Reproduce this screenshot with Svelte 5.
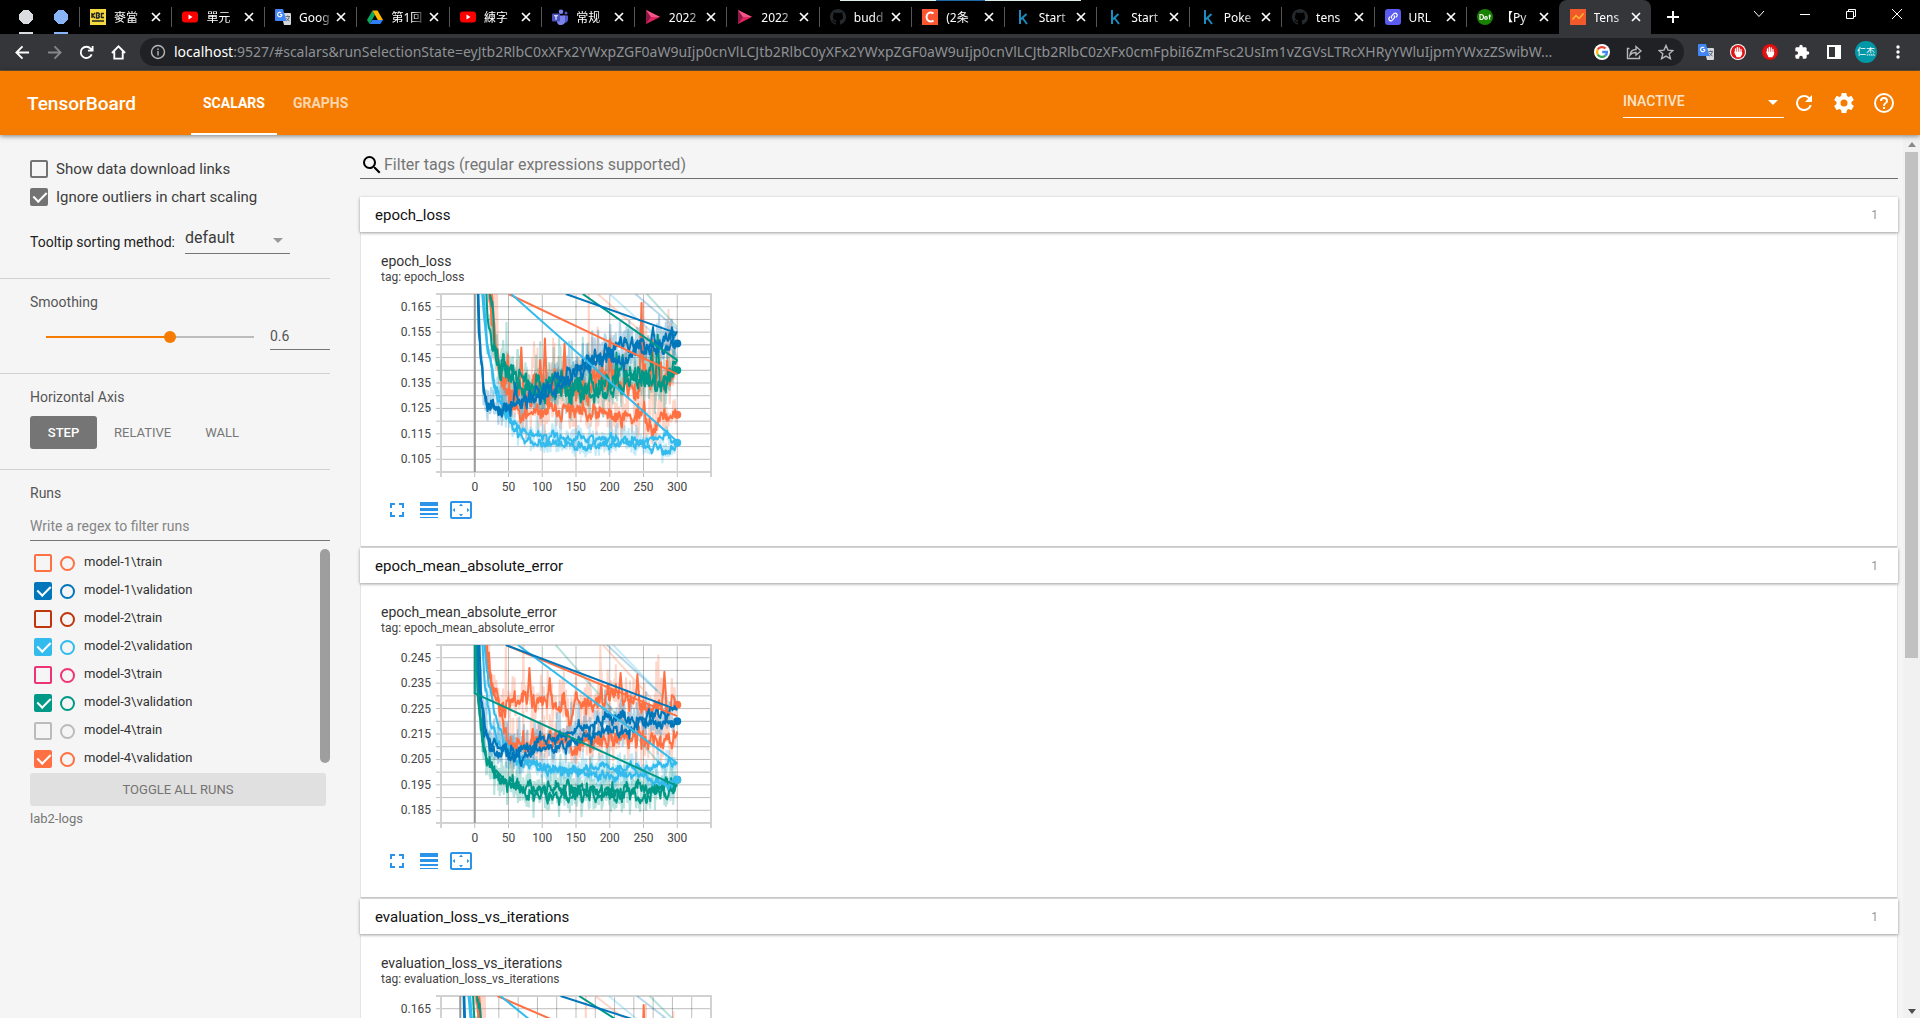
<script>
  const tabs = [
    { icon: 'kbc', title: '麥當' },
    { icon: 'youtube', title: '單元' },
    { icon: 'translate', title: 'Goog' },
    { icon: 'drive', title: '第1回' },
    { icon: 'youtube', title: '練字' },
    { icon: 'teams', title: '常规' },
    { icon: 'play', title: '2022' },
    { icon: 'play', title: '2022' },
    { icon: 'github', title: 'budd' },
    { icon: 'c', title: '(2条' },
    { icon: 'k', title: 'Start' },
    { icon: 'k', title: 'Start' },
    { icon: 'k', title: 'Poke' },
    { icon: 'github', title: 'tens' },
    { icon: 'link', title: 'URL' },
    { icon: 'dot', title: '【Py' },
    { icon: 'tb', title: 'Tens', active: true },
  ];

  const urlRest =
    ':9527/#scalars&runSelectionState=eyJtb2RlbC0xXFx2YWxpZGF0aW9uIjp0cnVlLCJtb2RlbC0yXFx2YWxpZGF0aW9uIjp0cnVlLCJtb2RlbC0zXFx0cmFpbiI6ZmFsc2UsIm1vZGVsLTRcXHRyYWluIjpmYWxzZSwibW...';

  const ORANGE = '#ff7043';
  const BLUE = '#0077bb';
  const CYAN = '#33bbee';
  const TEAL = '#009988';

  let runs = $state([
    { name: 'model-1\\train', color: ORANGE, on: false },
    { name: 'model-1\\validation', color: BLUE, on: true },
    { name: 'model-2\\train', color: '#bf360c', on: false },
    { name: 'model-2\\validation', color: CYAN, on: true },
    { name: 'model-3\\train', color: '#ee3377', on: false },
    { name: 'model-3\\validation', color: TEAL, on: true },
    { name: 'model-4\\train', color: '#bbbbbb', on: false },
    { name: 'model-4\\validation', color: ORANGE, on: true },
  ]);

  let showLinks = $state(false);
  let ignoreOutliers = $state(true);
  let smoothing = $state(0.6);
  let axis = $state('STEP');

  function toggleAll() {
    const next = !runs.some((r) => r.on);
    for (const r of runs) r.on = next;
  }

  // Plot area inside each chart's SVG
  const P = { x: 60, y: 1, w: 270, h: 178 };

  function rng(seed) {
    let s = seed;
    return () => {
      s = (s * 1664525 + 1013904223) % 4294967296;
      return s / 4294967296;
    };
  }

  function lerp(points, x) {
    for (let i = 1; i < points.length; i++) {
      if (x <= points[i][0]) {
        const [x0, y0] = points[i - 1];
        const [x1, y1] = points[i];
        return y0 + ((y1 - y0) * (x - x0)) / (x1 - x0);
      }
    }
    return points[points.length - 1][1];
  }

  function trace(pass, c, seed) {
    const rand = rng(seed);
    const { pts, amp, spikes = [] } = pass;
    let line = '';
    let raw = '';
    let drift = 0;
    for (let s = pts[0][0]; s <= 300; s += 1) {
      const base = lerp(pts, s);
      const n = (rand() + rand() + rand() - 1.5) * 1.7;
      drift = drift * 0.55 + n * amp;
      const damp = s > 294 ? (300 - s) / 6 : 1;
      let v = base + drift * damp;
      for (const [sx, sv] of spikes) {
        const d = Math.abs(s - sx);
        if (d < 3) v = Math.max(v, sv - ((sv - base) * d) / 3);
      }
      const r = base + (n * amp * 2.8 + (rand() > 0.9 ? amp * 8 * rand() : 0)) * damp;
      const px = c.sx(s).toFixed(1);
      line += `${line ? 'L' : 'M'}${px} ${c.sy(v).toFixed(1)}`;
      raw += `${raw ? 'L' : 'M'}${px} ${c.sy(r).toFixed(1)}`;
    }
    return { line, raw };
  }

  function build(def) {
    const span = def.xmax - def.xmin;
    const c = {
      sx: (v) => P.x + (((def.stretch ?? 1) * v - def.xmin) / span) * P.w,
      sy: (v) => P.y + ((def.top - v) / 0.07) * P.h,
    };
    const series = def.series.map((s, i) => ({
      color: s.color,
      passes: s.passes.map((p, j) => trace(p, c, def.seed + i * 17 + j * 5)),
      link: s.link.map(([x, y]) => `${c.sx(x)},${c.sy(y)}`).join(' '),
      faint: s.faint.map(([x, y]) => `${c.sx(x)},${c.sy(y)}`).join(' '),
      dot: { x: c.sx(300), y: c.sy(s.dot) },
    }));
    const rows = Array.from({ length: 13 }, (_, i) => P.y + (P.h * (i + 1)) / 14);
    const yLabels = Array.from({ length: 7 }, (_, i) => ({
      y: P.y + (P.h * (1 + 2 * i)) / 14,
      text: (def.top - 0.005 - 0.01 * i).toFixed(3),
    }));
    const cols = Array.from({ length: def.cols - 1 }, (_, i) => P.x + (P.w * (i + 1)) / def.cols);
    const xLabels = def.labels.map((v) => ({ x: P.x + ((v - def.xmin) / span) * P.w, text: v }));
    return { ...def, series, rows, cols, yLabels, xLabels, zero: P.x + ((0 - def.xmin) / span) * P.w };
  }

  const lossSeries = [
    {
      color: ORANGE, dot: 0.1225,
      passes: [
        { amp: 0.0019, pts: [[22, 0.185], [27, 0.165], [32, 0.146], [45, 0.132], [60, 0.125], [80, 0.122], [110, 0.124], [200, 0.122], [250, 0.1225], [264, 0.117], [280, 0.123], [300, 0.1225]] },
        { amp: 0.0034, pts: [[17, 0.185], [24, 0.165], [32, 0.145], [48, 0.133], [80, 0.13], [130, 0.133], [200, 0.135], [240, 0.132], [300, 0.14]], spikes: [[49, 0.146], [69, 0.149], [97, 0.144], [104, 0.1525], [133, 0.1505], [200, 0.152], [247, 0.1665], [263, 0.152]] },
      ],
      link: [[50, 0.17], [300, 0.1385]], faint: [[182, 0.17], [300, 0.143]],
    },
    {
      color: TEAL, dot: 0.14,
      passes: [
        { amp: 0.0021, pts: [[13, 0.185], [20, 0.16], [28, 0.149], [40, 0.14], [55, 0.137], [80, 0.132], [120, 0.132], [160, 0.131], [200, 0.132], [240, 0.136], [280, 0.134], [300, 0.144]], spikes: [[210, 0.147]] },
        { amp: 0.0023, pts: [[18, 0.185], [26, 0.158], [34, 0.145], [50, 0.14], [80, 0.135], [120, 0.134], [180, 0.134], [220, 0.138], [260, 0.136], [300, 0.14]], spikes: [[26, 0.167], [219, 0.146], [262, 0.148], [271, 0.154]] },
      ],
      link: [[160, 0.17], [300, 0.144]], faint: [[255, 0.17], [300, 0.157]],
    },
    {
      color: CYAN, dot: 0.1115,
      passes: [
        { amp: 0.001, pts: [[9, 0.185], [18, 0.15], [33, 0.13], [50, 0.121], [66, 0.117], [90, 0.115], [110, 0.1135], [200, 0.113], [245, 0.111], [270, 0.113], [285, 0.1145], [300, 0.112]] },
        { amp: 0.001, pts: [[6, 0.185], [15, 0.155], [28, 0.137], [45, 0.124], [60, 0.116], [75, 0.111], [110, 0.111], [160, 0.1105], [240, 0.1115], [270, 0.1095], [288, 0.107], [300, 0.1115]] },
      ],
      link: [[54, 0.17], [300, 0.112]], faint: [[200, 0.17], [300, 0.146]],
    },
    {
      color: BLUE, dot: 0.1505,
      passes: [
        { amp: 0.0015, pts: [[3, 0.185], [6, 0.155], [12, 0.136], [18, 0.128], [28, 0.125], [40, 0.125], [60, 0.127], [100, 0.131], [130, 0.137], [165, 0.143], [200, 0.147], [215, 0.151], [250, 0.15], [275, 0.151], [290, 0.154], [300, 0.155]], spikes: [[60, 0.135], [264, 0.157]] },
        { amp: 0.0015, pts: [[4, 0.185], [8, 0.148], [13, 0.134], [20, 0.127], [30, 0.124], [50, 0.125], [70, 0.127], [100, 0.132], [130, 0.134], [160, 0.14], [200, 0.145], [225, 0.145], [240, 0.149], [270, 0.149], [300, 0.1505]] },
      ],
      link: [[135, 0.17], [300, 0.1545]], faint: [[238, 0.17], [300, 0.156]],
    },
  ];

  const maeSeries = [
    {
      color: ORANGE, dot: 0.2265,
      passes: [
        { amp: 0.0024, pts: [[12, 0.265], [18, 0.246], [26, 0.234], [38, 0.227], [60, 0.228], [100, 0.228], [140, 0.225], [180, 0.228], [200, 0.231], [240, 0.227], [300, 0.2265]], spikes: [[81, 0.241], [111, 0.237], [216, 0.239], [241, 0.2385], [281, 0.2395]] },
        { amp: 0.0022, pts: [[14, 0.265], [20, 0.24], [32, 0.228], [45, 0.218], [60, 0.211], [100, 0.212], [150, 0.211], [200, 0.213], [250, 0.213], [285, 0.212], [300, 0.216]] },
      ],
      link: [[46, 0.25], [300, 0.222]], faint: [[190, 0.25], [275, 0.225]],
    },
    {
      color: TEAL, dot: 0.197,
      passes: [
        { amp: 0.0016, pts: [[1, 0.265], [4, 0.232], [10, 0.214], [18, 0.204], [40, 0.197], [60, 0.194], [100, 0.191], [160, 0.1915], [230, 0.192], [280, 0.191], [300, 0.195]] },
        { amp: 0.0016, pts: [[3, 0.265], [7, 0.225], [15, 0.207], [30, 0.2], [50, 0.195], [90, 0.194], [150, 0.1935], [200, 0.192], [260, 0.1935], [300, 0.196]] },
      ],
      link: [[0, 0.265], [0, 0.231], [300, 0.1945]], faint: [[120, 0.25], [285, 0.2]],
    },
    {
      color: CYAN, dot: 0.197,
      passes: [
        { amp: 0.001, pts: [[8, 0.265], [15, 0.235], [25, 0.218], [40, 0.209], [70, 0.204], [110, 0.201], [200, 0.2015], [260, 0.202], [285, 0.204], [300, 0.2035]] },
        { amp: 0.001, pts: [[9, 0.265], [18, 0.24], [30, 0.222], [45, 0.211], [75, 0.204], [130, 0.2], [160, 0.2], [200, 0.198], [240, 0.199], [280, 0.196], [300, 0.197]] },
      ],
      link: [[64, 0.25], [300, 0.2035]], faint: [[205, 0.25], [300, 0.224]],
    },
    {
      color: BLUE, dot: 0.22,
      passes: [
        { amp: 0.0014, pts: [[3, 0.265], [7, 0.232], [14, 0.217], [22, 0.21], [40, 0.209], [70, 0.208], [100, 0.212], [130, 0.215], [165, 0.218], [200, 0.222], [240, 0.221], [270, 0.223], [300, 0.225]] },
        { amp: 0.0014, pts: [[5, 0.265], [10, 0.225], [18, 0.212], [30, 0.208], [60, 0.206], [90, 0.208], [130, 0.21], [170, 0.214], [200, 0.217], [225, 0.216], [250, 0.219], [300, 0.22]] },
      ],
      link: [[46, 0.25], [300, 0.2245]], faint: [[196, 0.25], [270, 0.232]],
    },
  ];

  const sections = [
    build({ name: 'epoch_loss', top: 0.17, seed: 11, xmin: -50, xmax: 350, cols: 8, labels: [0, 50, 100, 150, 200, 250, 300], series: lossSeries }),
    build({ name: 'epoch_mean_absolute_error', top: 0.25, seed: 47, xmin: -50, xmax: 350, cols: 8, labels: [0, 50, 100, 150, 200, 250, 300], series: maeSeries }),
    build({ name: 'evaluation_loss_vs_iterations', top: 0.17, seed: 11, xmin: -20, xmax: 260, stretch: 0.77, cols: 14, labels: [0, 40, 80, 120, 160, 200, 240], series: lossSeries }),
  ];
</script>

{#snippet favicon(kind)}
  <svg class="fav" viewBox="0 0 16 16" aria-hidden="true">
    {#if kind === 'kbc'}
      <rect width="16" height="16" fill="#f3d93f" />
      <path d="M2 4v5M5 4L2.5 6.5 5 9M6.5 4v5h2l1-1.2-1-1.3 1-1.3L8.500 4zM14 4.500h-2.500v4H14M2 12h12" stroke="#222" stroke-width="1.400" fill="none" />
    {:else if kind === 'youtube'}
      <rect y="2.500" width="16" height="11" rx="3" fill="#f00" />
      <path d="M6.500 5.500v5L10.500 8z" fill="#fff" />
    {:else if kind === 'translate'}
      <path d="M6 4h9a1 1 0 0 1 1 1v10a1 1 0 0 1-1 1H9z" fill="#d5d8dc" />
      <path d="M1 0h7l3.500 12H1a1 1 0 0 1-1-1V1a1 1 0 0 1 1-1z" fill="#4285f4" />
      <path d="M7 5.500H5M7 5.500A2.200 2.200 0 1 1 6.200 3.800" stroke="#fff" stroke-width="1.100" fill="none" />
      <path d="M10.500 7.500H15M12.700 6.500v1M14.300 7.500c-.3 2-1.500 3.500-3 4.500M11.500 9c.5 1.300 1.500 2.300 3 3" stroke="#5f6b77" fill="none" />
    {:else if kind === 'drive'}
      <path d="M5.500 1.500L0 11l2.700 4L8 5.800z" fill="#0da960" />
      <path d="M5.500 1.500h5l5.500 9.500h-5.200z" fill="#ffba00" />
      <path d="M5.300 11H16l-2.700 4H2.700z" fill="#2d7df6" />
    {:else if kind === 'teams'}
      <circle cx="9" cy="2.800" r="2.300" fill="#7b83eb" />
      <circle cx="14" cy="4" r="1.500" fill="#5059c9" />
      <path d="M11 6.500h5v4.500a3 3 0 0 1-4 2.500z" fill="#5059c9" />
      <path d="M5 6.500h8v5a4 4 0 0 1-8 1z" fill="#7b83eb" />
      <rect y="4.500" width="8" height="8" rx="1" fill="#4b53bc" />
      <path d="M2 6.700h4M4 6.700v4" stroke="#fff" stroke-width="1.100" />
    {:else if kind === 'play'}
      <path d="M1 1l14 7-14 7z" fill="#e0245e" />
      <path d="M1 1l5 7-5 7z" fill="#8e1748" />
      <path d="M1 1l14 7H6z" fill="#f0588a" />
    {:else if kind === 'github'}
      <path fill="#24292e" d="M8 0C3.580 0 0 3.580 0 8c0 3.540 2.290 6.530 5.470 7.590.4.070.55-.17.55-.38 0-.19-.01-.82-.01-1.490-2.010.37-2.530-.49-2.690-.94-.09-.23-.48-.94-.82-1.130-.28-.15-.68-.52-.01-.53.63-.01 1.080.58 1.230.82.72 1.210 1.870.87 2.330.66.07-.52.28-.87.51-1.070-1.780-.2-3.640-.89-3.640-3.950 0-.87.31-1.590.82-2.150-.08-.2-.36-1.020.08-2.120 0 0 .67-.21 2.200.82.64-.18 1.320-.27 2-.27s1.360.09 2 .27c1.530-1.040 2.200-.82 2.200-.82.44 1.100.16 1.920.08 2.120.51.56.82 1.270.82 2.150 0 3.070-1.870 3.750-3.650 3.950.29.25.54.73.54 1.480 0 1.070-.01 1.930-.01 2.200 0 .21.15.46.55.38A8 8 0 0 0 8 0" />
    {:else if kind === 'c'}
      <rect width="16" height="16" fill="#fc5531" />
      <path d="M11.500 4.500C8 2 4.500 4.500 4.500 8s3.500 6 7 3.500" stroke="#fff" stroke-width="2" fill="none" />
    {:else if kind === 'k'}
      <path d="M5 1v14M11.500 5L5.500 10.500M7.500 9l4.500 6" stroke="#1d8bbd" stroke-width="2" fill="none" />
    {:else if kind === 'link'}
      <rect width="16" height="16" rx="3" fill="#5b5bf0" />
      <path d="M7 9.500a2 2 0 0 1 0-2.800L9 4.600a2 2 0 0 1 2.800 2.800l-1 1M9 6.500a2 2 0 0 1 0 2.800l-2 2.100a2 2 0 0 1-2.800-2.800l1-1" stroke="#fff" stroke-width="1.200" fill="none" />
    {:else if kind === 'dot'}
      <circle cx="8" cy="8" r="8" fill="#178200" />
      <path d="M3 5.500v5h1a2.500 2.500 0 0 0 0-5zM11.500 7h2.500M12.600 5.500v5" stroke="#fff" stroke-width="1.100" fill="none" />
      <circle cx="9" cy="8.900" r="1.300" stroke="#fff" stroke-width="1.100" fill="none" />
    {:else}
      <rect width="16" height="16" fill="#f1592a" />
      <path d="M2.500 10.500L6 6.500 9 9.500 13.500 4.500" stroke="#ffb733" stroke-width="1.500" fill="none" />
    {/if}
  </svg>
{/snippet}

<div class="window">
  <div class="tabstrip">
    <div class="strip-mark" aria-hidden="true"></div>
    <div class="pinned"><i></i><i class="blue"></i></div>
    <div class="tabs">
      {#each tabs as t}
        <div class="tab" class:active={t.active}>
          {@render favicon(t.icon)}
          <span class="tab-title">{t.title}</span>
          <button class="close" aria-label="Close tab">
            <svg viewBox="0 0 10 10"><path d="M1 1l8 8M9 1L1 9" stroke="#fff" stroke-width="1.700" /></svg>
          </button>
        </div>
      {/each}
    </div>
    <button class="newtab" aria-label="New tab">
      <svg width="14" height="14" viewBox="0 0 14 14"><path d="M7 1v12M1 7h12" stroke="#fff" stroke-width="2" /></svg>
    </button>
    <div class="winctl">
      <button aria-label="Search tabs"><svg viewBox="0 0 12 12"><path d="M1 3l5 5.500L11 3" /></svg></button>
      <button aria-label="Minimize"><svg viewBox="0 0 12 12"><path d="M1 6.500h10" /></svg></button>
      <button aria-label="Restore"><svg viewBox="0 0 12 12"><path d="M1.500 3.500h7v7h-7zM3.500 3.500v-2h7v7h-2" /></svg></button>
      <button aria-label="Close window"><svg viewBox="0 0 12 12"><path d="M1 1l10 10M11 1L1 11" /></svg></button>
    </div>
  </div>

  <div class="toolbar">
    <div class="nav">
      <button aria-label="Back"><svg viewBox="0 0 16 16"><path d="M15 8H2M8 1.500L1.500 8 8 14.500" /></svg></button>
      <button aria-label="Forward" class="dim"><svg viewBox="0 0 16 16"><path d="M1 8h13M8 1.500L14.500 8 8 14.500" /></svg></button>
      <button aria-label="Reload"><svg viewBox="0 0 16 16"><path d="M13.500 10A6 6 0 1 1 12.500 4L14 5.500M14.500 1v5h-5" /></svg></button>
      <button aria-label="Home"><svg viewBox="0 0 16 16"><path d="M1 8.500L8 1.500l7 7M3.500 7v7.500h9V7" /></svg></button>
    </div>
    <div class="omnibox">
      <svg class="info" viewBox="0 0 16 16"><circle cx="8" cy="8" r="6.500" /><path d="M8 7v4.500M8 4.500V6" /></svg>
      <div class="url"><b>localhost</b>{urlRest}</div>
      <button aria-label="Google">
        <svg viewBox="0 0 16 16">
          <circle cx="8" cy="8" r="8" fill="#fff" />
          <g fill="none" stroke-width="2.300">
            <path d="M11.500 4.500A5 5 0 0 0 3.700 5.500" stroke="#ea4335" /><path d="M3.700 5.500a5 5 0 0 0 0 5" stroke="#fbbc05" />
            <path d="M3.700 10.500a5 5 0 0 0 7.600 1.200" stroke="#34a853" /><path d="M11.300 11.700A5 5 0 0 0 13 8H8.200" stroke="#4285f4" />
          </g>
        </svg>
      </button>
      <button aria-label="Share"><svg class="line" viewBox="0 0 16 16"><path d="M3.500 4.500h-2v10h12v-3M4 11c.5-4 3-5.500 6-5.500V2.500L15 7l-5 4V8.500C7.500 8.500 5.500 9 4 11z" /></svg></button>
      <button aria-label="Bookmark"><svg class="line" viewBox="0 0 16 16"><path d="M8 1.500l2 4.600 5 .4-3.800 3.300 1.200 4.900L8 12.100l-4.400 2.600 1.200-4.900L1 6.500l5-.4z" /></svg></button>
    </div>
    <div class="ext">
      <button aria-label="Translate">{@render favicon('translate')}</button>
      {#each [true, false] as ring}
        <button aria-label="Ad blocker">
          <svg viewBox="0 0 16 16">
            <circle cx="8" cy="8" r="8" fill={ring ? '#fff' : '#d50d0d'} />
            <circle cx="8" cy="8" r="7" fill="#e01414" />
            <path d="M5.500 5v5M7.300 3.500V9M9.200 4v5M11 5.500V10M5 8.500h6.500v1.500L10 12.500H7z" stroke="#fff" stroke-width="1.300" fill="#fff" stroke-linecap="round" />
          </svg>
        </button>
      {/each}
      <button aria-label="Extensions"><svg viewBox="0 0 24 24"><path fill="#fff" d="M20.500 11H19V7c0-1.100-.9-2-2-2h-4V3.500a2.500 2.500 0 0 0-5 0V5H4c-1.100 0-2 .9-2 2v3.800h1.500a2.700 2.700 0 0 1 0 5.400H2V20c0 1.100.9 2 2 2h3.800v-1.500a2.700 2.700 0 0 1 5.400 0V22H17c1.100 0 2-.9 2-2v-4h1.500a2.500 2.500 0 0 0 0-5z" /></svg></button>
      <button aria-label="Side panel"><svg viewBox="0 0 16 16"><path d="M1 1h14v14H1zM3 3v10h6V3z" fill="#fff" fill-rule="evenodd" /></svg></button>
      <button aria-label="Profile" class="avatar">仁杰</button>
      <button aria-label="Menu"><svg viewBox="0 0 16 16" fill="#fff"><circle cx="8" cy="3" r="1.700" /><circle cx="8" cy="8" r="1.700" /><circle cx="8" cy="13" r="1.700" /></svg></button>
    </div>
  </div>

  <header>
    <h1>TensorBoard</h1>
    <nav>
      <a class="current" href="#scalars">SCALARS</a>
      <a href="#graphs">GRAPHS</a>
    </nav>
    <div class="pick">
      <select aria-label="Inactive dashboards"><option>INACTIVE</option></select>
      <svg width="10" height="5" viewBox="0 0 10 5"><path d="M0 0h10L5 5z" fill="#fff" /></svg>
    </div>
    <div class="actions">
      <button aria-label="Reload data"><svg viewBox="0 0 24 24"><path d="M17.650 6.350A7.960 7.960 0 0 0 12 4a8 8 0 1 0 7.730 10h-2.080A6 6 0 1 1 12 6c1.660 0 3.140.69 4.220 1.780L13 11h7V4z" /></svg></button>
      <button aria-label="Settings"><svg viewBox="0 0 24 24"><path d="M19.430 12.980c.04-.32.07-.64.07-.98s-.03-.66-.07-.98l2.110-1.650c.19-.15.24-.42.12-.64l-2-3.460c-.12-.22-.39-.3-.61-.22l-2.490 1c-.52-.4-1.080-.73-1.690-.98l-.38-2.650A.49.49 0 0 0 14 2h-4c-.25 0-.46.18-.49.42l-.38 2.650c-.61.25-1.170.59-1.690.98l-2.490-1c-.23-.09-.49 0-.61.22l-2 3.460c-.13.22-.07.49.12.64l2.110 1.650c-.04.32-.07.65-.07.98s.03.66.07.98l-2.110 1.650c-.19.15-.24.42-.12.64l2 3.460c.12.22.39.3.61.22l2.490-1c.52.4 1.080.73 1.690.98l.38 2.650c.03.24.24.42.49.42h4c.25 0 .46-.18.49-.42l.38-2.650c.61-.25 1.170-.59 1.690-.98l2.490 1c.23.09.49 0 .61-.22l2-3.460c.12-.22.07-.49-.12-.64zM12 15.500a3.500 3.500 0 1 1 0-7 3.500 3.500 0 0 1 0 7z" /></svg></button>
      <button aria-label="Help"><svg viewBox="0 0 24 24"><path d="M11 18h2v-2h-2zm1-16a10 10 0 1 0 0 20 10 10 0 0 0 0-20zm0 18a8 8 0 1 1 0-16 8 8 0 0 1 0 16zm0-14a4 4 0 0 0-4 4h2a2 2 0 1 1 4 0c0 2-3 1.750-3 5h2c0-2.250 3-2.500 3-5a4 4 0 0 0-4-4z" /></svg></button>
    </div>
  </header>

  <div class="content">
    <aside>
      <section class="opts">
        <label class="check"><input type="checkbox" bind:checked={showLinks} />Show data download links</label>
        <label class="check"><input type="checkbox" bind:checked={ignoreOutliers} />Ignore outliers in chart scaling</label>
        <div class="sorting">
          <label for="sort">Tooltip sorting method:</label>
          <div class="dropdown">
            <select id="sort"><option>default</option><option>ascending</option><option>descending</option><option>nearest</option></select>
            <svg width="10" height="5" viewBox="0 0 10 5"><path d="M0 0h10L5 5z" fill="#999" /></svg>
          </div>
        </div>
      </section>
      <section class="smooth">
        <label class="heading" for="smoothing">Smoothing</label>
        <div class="slide">
          <input id="smoothing" type="range" min="0" max="1" step="0.001" bind:value={smoothing} />
          <input class="num" type="text" aria-label="Smoothing value" bind:value={smoothing} />
        </div>
      </section>
      <section class="axis">
        <div class="heading">Horizontal Axis</div>
        <div class="modes">
          {#each ['STEP', 'RELATIVE', 'WALL'] as m}
            <button class:on={axis === m} onclick={() => (axis = m)}>{m}</button>
          {/each}
        </div>
      </section>
      <section class="runs">
        <label class="heading" for="regex">Runs</label>
        <input id="regex" class="regex" type="text" placeholder="Write a regex to filter runs" />
        <div class="runbox">
          <ul>
            {#each runs as r, i}
              <li style:--c={r.color}>
                <input type="checkbox" id="run{i}" bind:checked={r.on} />
                <button class="iso" aria-label="Show only {r.name}"></button>
                <label for="run{i}">{r.name}</label>
              </li>
            {/each}
          </ul>
          <div class="runbar"></div>
        </div>
        <button class="toggle" onclick={toggleAll}>TOGGLE ALL RUNS</button>
        <div class="logdir">lab2-logs</div>
      </section>
    </aside>

    <main>
      <div class="filter">
        <svg viewBox="0 0 24 24"><path d="M15.500 14h-.79l-.28-.27A6.470 6.470 0 0 0 16 9.500 6.500 6.500 0 1 0 9.500 16c1.610 0 3.090-.59 4.230-1.570l.27.28v.79l5 4.990L20.490 19zm-6 0a4.500 4.500 0 1 1 0-9 4.500 4.500 0 0 1 0 9z" /></svg>
        <input type="text" aria-label="Filter tags" placeholder="Filter tags (regular expressions supported)" />
      </div>
      {#each sections as s, si}
        <article>
          <button class="cardhead"><span>{s.name}</span><span class="count">1</span></button>
          <div class="cardbody">
            <h2>{s.name}</h2>
            <p>tag: {s.name}</p>
            <svg class="chart" width="336" height="202" viewBox="0 0 336 202">
              <defs><clipPath id="clip{si}"><rect x={P.x} y={P.y} width={P.w + 4} height={P.h} /></clipPath></defs>
              <g class="grid">
                {#each s.rows as y}<line x1={P.x - 5} x2={P.x + P.w} y1={y} y2={y} />{/each}
                {#each s.cols as x}<line x1={x} x2={x} y1={P.y} y2={P.y + P.h + 5} />{/each}
              </g>
              <path class="frame" d="M{P.x - 5} {P.y}H{P.x + P.w}V{P.y + P.h + 5}M{P.x + P.w} {P.y + P.h}H{P.x - 5}M{P.x} {P.y}V{P.y + P.h + 5}" />
              <line class="zero" x1={s.zero} x2={s.zero} y1={P.y} y2={P.y + P.h} />
              <g clip-path="url(#clip{si})" fill="none">
                {#each s.series as q}
                  <g stroke={q.color} opacity="0.28" stroke-width="2">
                    {#each q.passes as p}<path d={p.raw} stroke-linejoin="bevel" />{/each}
                    <polyline points={q.faint} />
                  </g>
                {/each}
                {#each s.series as q}
                  <g stroke={q.color} stroke-width="2" stroke-linejoin="round">
                    {#each q.passes as p}<path d={p.line} />{/each}
                  </g>
                  <circle cx={q.dot.x} cy={q.dot.y} r="4" fill={q.color} />
                {/each}
                {#each s.series as q}<polyline points={q.link} stroke={q.color} stroke-width="2" />{/each}
              </g>
              {#each s.yLabels as l}<text x="50" y={l.y + 4} text-anchor="end">{l.text}</text>{/each}
              {#each s.xLabels as l}<text x={l.x} y="198" text-anchor="middle">{l.text}</text>{/each}
            </svg>
            <div class="tools">
              <button aria-label="Toggle size"><svg viewBox="0 0 24 24"><path d="M7 14H5v5h5v-2H7zM5 10h2V7h3V5H5zm12 7h-3v2h5v-5h-2zM14 5v2h3v3h2V5z" /></svg></button>
              <button aria-label="Toggle y-axis log scale"><svg viewBox="0 0 24 24"><path d="M3 4h18v4H3zM3 10h18v3H3zM3 15h18v2H3zM3 19h18v1H3z" /></svg></button>
              <button aria-label="Fit domain to data"><svg viewBox="0 0 24 24"><path d="M12 5.500L10 8h4l-2-2.500zm6 4.500v4l2.500-2L18 10zM6 10l-2.500 2L6 14v-4zm8 6h-4l2 2.500 2-2.500zm7-13H3a2 2 0 0 0-2 2v14c0 1.100.9 2 2 2h18c1.100 0 2-.9 2-2V5a2 2 0 0 0-2-2zm0 16H3V5h18v14z" /></svg></button>
            </div>
          </div>
        </article>
      {/each}
    </main>

    <div class="scrollbar" aria-hidden="true">
      <svg viewBox="0 0 8 5"><path d="M0 5h8L4 0z" fill="#8a8a8a" /></svg>
      <div class="thumb"></div>
      <svg viewBox="0 0 8 5"><path d="M0 0h8L4 5z" fill="#505050" /></svg>
    </div>
  </div>
</div>

<style>
  :global(body) { background: #f5f5f5; }
  .window { height: 100vh; display: flex; flex-direction: column; overflow: hidden; font-family: Roboto, "Noto Sans CJK TC", sans-serif; font-size: 14px; color: #212121; }
  .window * { box-sizing: border-box; }
  button { border: 0; padding: 0; background: none; font: inherit; color: inherit; cursor: pointer; }
  input, select { font: inherit; color: inherit; border: 0; border-radius: 0; background: none; outline: 0; padding: 0; margin: 0; }
  select { appearance: none; }
  svg { display: block; flex: none; }

  .tabstrip { position: relative; flex: none; display: flex; height: 34px; background: #000; }
  .strip-mark { position: absolute; top: 0; left: 840px; width: 241px; height: 1px; background: linear-gradient(90deg, #dfeee6 40%, #1c6aa5 40% 60%, #dfeee6 60%); }
  .pinned { display: flex; gap: 21px; width: 79px; padding: 10px 0 0 19px; }
  .pinned i { width: 14px; height: 24px; background: radial-gradient(circle at 7px 7px, #dadce0 7px, transparent 7px), linear-gradient(#dadce0, #dadce0) bottom / 14px 2px no-repeat; }
  .pinned .blue { background: radial-gradient(circle at 7px 7px, #8ab4f8 7px, transparent 7px), linear-gradient(#8ab4f8, #8ab4f8) bottom / 14px 2px no-repeat; }
  .tabs { flex: 1; display: flex; min-width: 0; }
  .tab { flex: 1 1 0; min-width: 0; display: flex; align-items: center; padding: 0 3px 0 11px; background: linear-gradient(#555, #555) left center / 1px 20px no-repeat; }
  .tab.active { background: #35363a; border-radius: 8px 8px 0 0; }
  .fav { width: 16px; height: 16px; }
  .tab-title { flex: 1; margin: 1px 0 0 8px; white-space: nowrap; font: 12px/16px "Noto Sans", "Noto Sans CJK TC", sans-serif; color: #fff; mask-image: linear-gradient(90deg, #000 65%, rgba(0, 0, 0, 0.3)); }
  .close { width: 24px; height: 16px; display: grid; place-items: center; }
  .close svg { width: 10px; height: 10px; }
  .newtab { width: 44px; display: grid; place-items: center; }
  .winctl { display: flex; width: 225px; justify-content: flex-end; }
  .winctl button { width: 46px; height: 28px; display: grid; place-items: center; }
  .winctl svg { width: 12px; height: 12px; fill: none; stroke: #fff; }

  .toolbar { flex: none; display: flex; align-items: center; height: 37px; background: #35363a; border-bottom: 1px solid #6b5238; }
  .nav { display: flex; padding: 0 6px; }
  .nav button, .ext button, .omnibox button { width: 32px; height: 28px; display: grid; place-items: center; }
  .nav svg { width: 15px; height: 15px; fill: none; stroke: #fff; stroke-width: 2; }
  .nav .dim svg { stroke: #85868a; }
  .omnibox { flex: 1; min-width: 0; display: flex; align-items: center; height: 28px; padding: 0 2px 0 10px; border-radius: 14px; background: #202124; }
  .omnibox svg { width: 16px; height: 16px; }
  .omnibox .info, .omnibox .line { fill: none; stroke: #b5b8bc; stroke-width: 1.400; }
  .url { flex: 1; margin-left: 8px; overflow: hidden; white-space: nowrap; font: 14px/20px "Noto Sans", sans-serif; color: #8e9195; }
  .url b { font-weight: 400; color: #fff; }
  .ext { display: flex; padding: 0 6px; }
  .ext svg { width: 16px; height: 16px; }
  .ext .avatar { width: 22px; height: 22px; margin: 3px 5px; border-radius: 50%; background: #0097a7; color: #fff; font-size: 9px; line-height: 22px; }

  header { position: relative; z-index: 1; flex: none; display: flex; align-items: center; height: 64px; padding: 0 24px 0 27px; background: #f57c00; color: #fff; box-shadow: 0 1px 5px rgba(0, 0, 0, 0.5); }
  h1 { width: 164px; margin: 0; font-size: 19px; font-weight: 500; }
  nav { align-self: stretch; display: flex; gap: 4px; flex: 1; }
  nav a { display: flex; align-items: center; padding: 2px 12px 0; border-bottom: 2px solid transparent; color: rgba(255, 255, 255, 0.7); font-size: 14px; font-weight: 700; text-decoration: none; }
  nav a.current { color: #fff; border-color: #fff; }
  .pick { position: relative; display: flex; align-items: center; width: 161px; border-bottom: 1px solid #fff; }
  .pick select { width: 100%; height: 28px; padding-bottom: 3px; font-size: 14px; font-weight: 500; color: rgba(255, 255, 255, 0.8); }
  .pick svg { position: absolute; right: 6px; pointer-events: none; }
  .actions { display: flex; gap: 16px; margin-left: 8px; }
  .actions button { width: 24px; height: 24px; }
  .actions svg { fill: #fff; }

  .content { flex: 1; min-height: 0; display: flex; overflow: hidden; }
  aside { flex: none; width: 360px; padding-right: 30px; }
  aside section { padding-left: 30px; border-bottom: 1px solid #d2d2d2; }
  .opts { height: 144px; padding-top: 20px; }
  .check { display: flex; align-items: center; gap: 8px; height: 28px; font-size: 15px; color: #3c3c3c; }
  input[type="checkbox"] { --c: #737373; appearance: none; width: 18px; height: 18px; border: 2px solid var(--c); border-radius: 2px; }
  input[type="checkbox"]:checked { background: var(--c); }
  input[type="checkbox"]:checked::after { content: ""; display: block; width: 6px; height: 11px; margin: -1px 0 0 4px; border: solid #fff; border-width: 0 2px 2px 0; transform: rotate(45deg); }
  li input[type="checkbox"] { --c: inherit; }
  .sorting { display: flex; align-items: flex-end; gap: 10px; margin-top: 12px; font-size: 14px; line-height: 24px; }
  .dropdown { position: relative; width: 105px; height: 31px; border-bottom: 1px solid #757575; font-size: 16px; }
  .dropdown select { width: 100%; height: 30px; color: #3c3c3c; }
  .dropdown svg { position: absolute; right: 7px; top: 15px; pointer-events: none; }
  .heading { display: block; font-size: 14px; line-height: 20px; color: #555; }
  .smooth { height: 95px; padding-top: 13px; }
  .slide { display: flex; align-items: center; margin-top: 11px; }
  .slide input[type="range"] { appearance: none; width: 208px; height: 12px; margin: 0 16px; background: linear-gradient(90deg, #f57c00 60%, #bdbdbd 60%) center / 100% 2px no-repeat; }
  .slide input[type="range"]::-webkit-slider-thumb { appearance: none; width: 12px; height: 12px; border-radius: 50%; background: #f57c00; }
  .num { width: 60px; height: 27px; border-bottom: 1px solid #757575; color: #555; }
  .axis { height: 96px; padding-top: 13px; }
  .modes { display: flex; margin-top: 9px; }
  .modes button { min-width: 67px; height: 33px; padding: 0 17px; border-radius: 3px; font-size: 13px; color: #777; }
  .modes button.on { background: #757575; color: #fff; font-weight: 500; }
  aside .runs { padding-top: 13px; border: 0; }
  .regex { width: 100%; height: 29px; margin-top: 9px; border-bottom: 1px solid #757575; }
  .regex::placeholder { color: #858585; opacity: 1; }
  .runbox { display: flex; justify-content: space-between; height: 229px; padding-top: 8px; overflow: hidden; }
  ul { margin: 0; padding: 0 0 0 4px; list-style: none; }
  li { display: flex; align-items: center; height: 28px; font-size: 13px; color: #333; }
  li label { padding-bottom: 3px; }
  .iso { width: 15px; height: 15px; margin: 0 9px 0 8px; border: 2px solid var(--c); border-radius: 50%; }
  .runbar { width: 10px; height: 214px; border-radius: 5px; background: #9e9e9e; }
  .toggle { display: block; width: 296px; height: 33px; margin-top: 3px; border-radius: 3px; background: #e0e0e0; font-size: 13px; color: #737373; }
  .logdir { margin-top: 5px; font-size: 13px; line-height: 16px; color: #757575; }

  main { flex: 1; min-width: 0; padding-top: 16px; }
  .filter { display: flex; align-items: center; height: 28px; margin-bottom: 18px; border-bottom: 1px solid #6f6f6f; }
  .filter svg { width: 24px; height: 24px; }
  .filter input { flex: 1; font-size: 16px; }
  .filter input::placeholder { color: #757575; opacity: 1; }
  article { margin-bottom: 1px; }
  .cardhead { position: relative; display: flex; align-items: center; justify-content: space-between; width: 100%; height: 35px; padding: 0 20px 0 15px; background: #fff; box-shadow: 0 1px 3px rgba(0, 0, 0, 0.4); font-size: 15px; color: #111; }
  .count { font-size: 12px; color: #999; }
  .cardbody { height: 315px; margin: 0 1px; padding: 20px 20px 0; background: #fff; border-bottom: 1px solid #ccc; box-shadow: 0 0 1px rgba(0, 0, 0, 0.4); }
  h2 { margin: 0; font-size: 14px; line-height: 18px; font-weight: 400; color: #333; }
  p { margin: 0; font-size: 12px; line-height: 14px; color: #444; }
  .chart { margin-top: 9px; }
  .grid line { stroke: rgba(0, 0, 0, 0.26); }
  .frame { stroke: #d2d2d2; stroke-width: 2; fill: none; }
  .zero { stroke: #999; stroke-width: 2; }
  .chart text { font-size: 12px; fill: #444; }
  .tools { display: flex; gap: 8px; margin: 3px 0 0 4px; }
  .tools button { width: 24px; height: 24px; }
  .tools svg { fill: #2b93e8; }

  .scrollbar { flex: none; display: flex; flex-direction: column; align-items: center; width: 17px; margin-left: 5px; padding: 7px 0 4px; background: #f1f1f1; }
  .scrollbar svg { width: 8px; height: 5px; }
  .thumb { width: 13px; height: 58%; margin: 5px 0 auto; background: #c1c1c1; }
</style>
